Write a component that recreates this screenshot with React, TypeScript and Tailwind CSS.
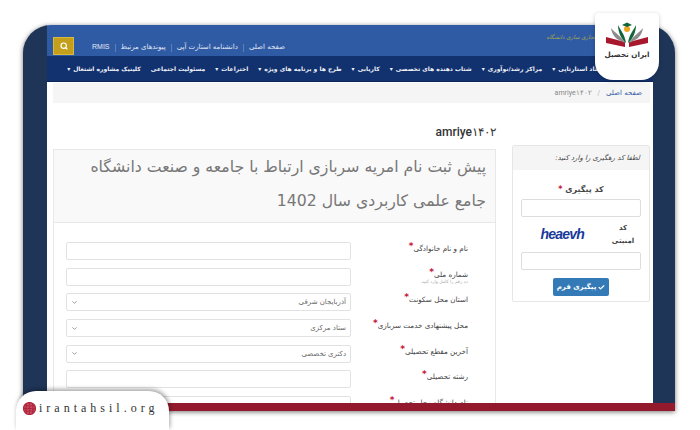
import React from 'react';
import { Search, Check, ChevronDown } from 'lucide-react';

const topLinks = ['صفحه اصلی', 'دانشنامه استارت آپی', 'پیوندهای مرتبط', 'RMIS'];

const navItems = [
  { label: 'ستاد استارتاپی', caret: true },
  { label: 'مراکز رشد/نوآوری', caret: true },
  { label: 'شتاب دهنده های تخصصی', caret: true },
  { label: 'کاریابی', caret: true },
  { label: 'طرح ها و برنامه های ویژه', caret: true },
  { label: 'اختراعات', caret: true },
  { label: 'مسئولیت اجتماعی', caret: false },
  { label: 'کلینیک مشاوره اشتغال', caret: true },
];

const fields = [
  { label: 'نام و نام خانوادگی' },
  { label: 'شماره ملی', hint: 'ده رقم را کامل وارد کنید' },
  { label: 'استان محل سکونت', select: 'آذربایجان شرقی' },
  { label: 'محل پیشنهادی خدمت سربازی', select: 'ستاد مرکزی' },
  { label: 'آخرین مقطع تحصیلی', select: 'دکتری تخصصی' },
  { label: 'رشته تحصیلی' },
  { label: 'نام دانشگاه محل تحصیل' },
];

const Row = ({ field }: { field: (typeof fields)[number] }) => (
  <div className="flex h-[25.7px] shrink-0 items-start">
    <div className="w-[102px] shrink-0 whitespace-nowrap text-[7.2px] leading-[10px] text-[#444]">
      <span>{field.label}</span>
      <span className="align-[2px] text-[9px] font-bold leading-[8px] text-[#c4123a]">*</span>
      {field.hint && <div className="mt-[-1px] text-[4.5px] leading-[6px] text-[#aaa]">{field.hint}</div>}
    </div>
    <div className="ml-[15px] mr-[15px] flex h-[18px] w-[285px] shrink-0 items-center justify-between rounded-[2px] border border-[#e2e2e2] bg-white px-[4px] text-[7px] text-[#666]">
      {field.select && (
        <>
          <span>{field.select}</span>
          <ChevronDown className="h-[7px] w-[7px] text-[#777]" strokeWidth={2.5} />
        </>
      )}
    </div>
  </div>
);

export default function App() {
  return (
    <div
      dir="rtl"
      className="relative h-[430px] w-[700px] overflow-hidden bg-white pt-[25px] font-['DejaVu_Sans','Noto_Sans',sans-serif]"
    >
      <div className="ml-[23px] mr-[25px] h-[386px] overflow-hidden rounded-t-[28px] border-b-[8px] border-[#931a2c] bg-[#1f3558] pl-[24px] pr-[22px] shadow-[0_1px_5px_rgba(0,0,0,0.55)]">
        <div className="flex h-full flex-col bg-white">
          <header className="flex h-[31px] shrink-0 items-center justify-between bg-[#2f5ba5] pl-[6px] pr-[58px]">
            <span className="pb-[6px] text-[5.5px] italic text-[#a9a84a]">تجاری سازی دانشگاه</span>
            <div className="flex items-center gap-[18px] pt-[11px]">
              <div className="flex items-center gap-[5px] pt-[3px] text-[7px] text-[#e3e9f5]">
                {topLinks.map((t, i) => (
                  <React.Fragment key={t}>
                    {i > 0 && <span className="h-[8px] w-px bg-[#5c80ba]" />}
                    <span className={t === 'RMIS' ? "font-['Liberation_Sans']" : ''}>{t}</span>
                  </React.Fragment>
                ))}
              </div>
              <button className="flex h-[18px] w-[21px] items-center justify-center border border-[#d8b840] bg-[#c39f1b]">
                <Search className="h-[8px] w-[8px] text-white" strokeWidth={3.5} />
              </button>
            </div>
          </header>

          <nav className="flex h-[26px] shrink-0 items-center gap-[10px] overflow-hidden whitespace-nowrap border-b border-[#0b2558] bg-[#12316f] pr-[50px] text-[6px] font-bold text-[#f0f3f8]">
            {navItems.map((item) => (
              <span key={item.label} className="flex items-center gap-[3px]">
                {item.label}
                {item.caret && <span className="text-[6px]">▾</span>}
              </span>
            ))}
          </nav>

          <div className="ml-[6px] mr-[3px] mt-[1px] flex h-[20px] shrink-0 items-center gap-[6px] bg-[#f5f5f5] pr-[8px] text-[7px]">
            <span className="text-[#2f5ba5]">صفحه اصلی</span>
            <span className="text-[#bbb]">/</span>
            <span className="font-['Roboto'] text-[#888]">amriye۱۴۰۲</span>
          </div>

          <main className="flex min-h-0 flex-1 gap-[16px] pl-[6px] pr-[3px] pt-[21px]">
            <aside className="mt-[21px] h-[157px] w-[138px] shrink-0 rounded-[2px] border border-[#e6e6e6]">
              <div className="flex h-[24px] items-center bg-[#f5f5f5] pr-[9px] text-[7px] italic text-[#444]">
                لطفا کد رهگیری را وارد کنید:
              </div>
              <div className="flex flex-col items-center px-[8px] pt-[14px]">
                <div className="text-[8px] font-bold leading-[12px] text-[#444]">
                  کد پیگیری <span className="text-[#c4123a]">*</span>
                </div>
                <div className="mt-[3px] h-[18px] w-full rounded-[2px] border border-[#ddd]" />
                <div className="flex h-[35px] w-full items-center">
                  <div className="w-[36px] px-[6px] text-center text-[7px] font-bold leading-[13px] text-[#444]">
                    کد امنیتی
                  </div>
                  <div
                    dir="ltr"
                    className="ml-auto mr-[21px] font-['Liberation_Sans'] text-[14px] font-bold italic tracking-[-0.8px] text-[#17399b]"
                  >
                    heaevh
                  </div>
                </div>
                <div className="h-[18px] w-full rounded-[2px] border border-[#ddd]" />
                <button className="mt-[8px] flex h-[18px] w-[56px] items-center justify-center gap-[2px] rounded-[2px] bg-[#337ab7] text-[7px] font-bold text-white">
                  <Check className="h-[7px] w-[7px]" strokeWidth={4} />
                  پیگیری فرم
                </button>
              </div>
            </aside>

            <section className="flex min-w-0 flex-1 flex-col">
              <h1 className="h-[25px] shrink-0 font-['Roboto'] text-[12px] font-medium leading-[16px] text-[#333]">
                amriye۱۴۰۲
              </h1>
              <div className="flex min-h-0 flex-1 flex-col border border-b-0 border-[#e8e8e8]">
                <h2 className="h-[73px] shrink-0 border-b border-[#e8e8e8] bg-[#f9f9f9] pr-[9px] text-[15.7px] leading-[34px] text-[#777]">
                  پیش ثبت نام امریه سربازی ارتباط با جامعه و صنعت دانشگاه
                  <br />
                  جامع علمی کاربردی سال 1402
                </h2>
                <div className="flex min-h-0 flex-1 flex-col pr-[27px] pt-[19px]">
                  {fields.map((f) => (
                    <Row key={f.label} field={f} />
                  ))}
                </div>
              </div>
            </section>
          </main>
        </div>
      </div>

      {/* logo badge */}
      <div className="absolute left-[595px] top-[13px] flex h-[67px] w-[64px] flex-col items-center rounded-b-[18px] rounded-t-[4px] bg-white pt-[9px] shadow-[0_1px_4px_rgba(0,0,0,0.2)]">
        <svg width="42" height="26" viewBox="0 0 42 26">
          <path d="M0 15 L19 20 L19 25 L0 21 Z" fill="#a8182c" />
          <path d="M42 15 L23 20 L23 25 L42 21 Z" fill="#a8182c" />
          <path d="M5 6 C9 11 15 14 19 21 L13 18 C9 16 6 12 5 6 Z" fill="#8c8c8c" />
          <path d="M37 6 C33 11 27 14 23 21 L29 18 C33 16 36 12 37 6 Z" fill="#8c8c8c" />
          <path d="M12 3 C15 9 19 13 20 21 C16 18 12 11 12 3 Z" fill="#14663a" />
          <path d="M30 3 C27 9 23 13 22 21 C26 18 30 11 30 3 Z" fill="#14663a" />
          <circle cx="21" cy="7" r="3" fill="#eda51d" />
          <path d="M16 3 L21 0.5 L26 3 L21 5 Z" fill="#14663a" />
        </svg>
        <div className="mt-[2px] text-[7.2px] font-bold text-[#333]">ایران تحصیل</div>
      </div>

      {/* site address badge */}
      <div
        dir="ltr"
        className="absolute bottom-0 left-[16px] flex h-[39px] w-[153px] items-start gap-[3px] rounded-t-[20px] bg-white pl-[7px] pt-[9px] shadow-[1px_-2px_4px_rgba(0,0,0,0.35)]"
      >
        <svg width="13" height="13" viewBox="0 0 24 24" fill="none" stroke="#b0283f" strokeWidth="2.4" className="mt-[2px] shrink-0">
          <circle cx="12" cy="12" r="11" fill="#d0596c" />
          <path d="M1 12h22M2.5 7h19M2.5 17h19M12 1v22M7 2.5c-2 6-2 13 0 19M17 2.5c2 6 2 13 0 19" />
        </svg>
        <span className="whitespace-nowrap font-['Liberation_Serif'] text-[12px] leading-[16px] tracking-[4px] text-[#333]">irantahsil.org</span>
      </div>
    </div>
  );
}
